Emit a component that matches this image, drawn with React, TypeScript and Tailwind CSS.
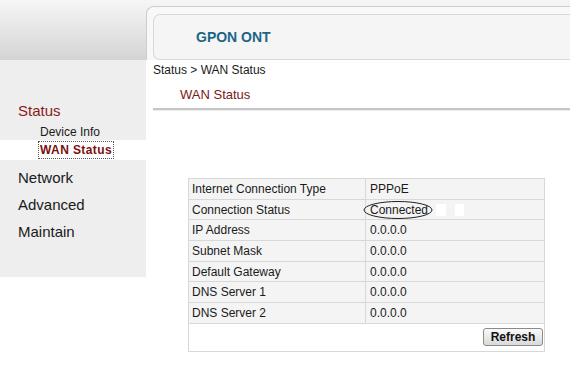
import React from 'react';

const rows: [string, string][] = [
  ['Internet Connection Type', 'PPPoE'],
  ['Connection Status', 'Connected'],
  ['IP Address', '0.0.0.0'],
  ['Subnet Mask', '0.0.0.0'],
  ['Default Gateway', '0.0.0.0'],
  ['DNS Server 1', '0.0.0.0'],
  ['DNS Server 2', '0.0.0.0'],
];

export default function App() {
  return (
    <div className="w-[570px] h-[369px] bg-white overflow-hidden font-['Liberation_Sans',Arial,sans-serif] text-[#1a1a1a]">
      {/* header */}
      <div className="flex h-[60px] bg-gradient-to-b from-[#f6f6f6] to-[#d4d4d4]">
        <div className="w-[146px]" />
        <div className="flex-1 mt-[6px] pl-[6px] pt-[7px] rounded-tl-[8px] border-t border-l border-[#cdcdcd] bg-[#f8f8f8]">
          <div className="h-[46px] flex items-center pl-[42px] rounded-l-[7px] border border-r-0 border-[#d8d8d8] bg-[#f5f5f5]">
            <span className="text-[14px] font-bold text-[#1d6587]">GPON ONT</span>
          </div>
        </div>
      </div>

      <div className="flex">
        {/* sidebar */}
        <div className="w-[146px] h-[217px] bg-[#eeeeee] pt-[42px]">
          <div className="pl-[18px] text-[15px] leading-[18px] text-[#8b1a1a]">Status</div>
          <div className="pl-[40px] mt-[4px] text-[12px] leading-[16px]">Device Info</div>
          <div className="bg-white h-[20px] flex items-center pl-[39px]">
            <span className="text-[12px] leading-[16px] font-bold tracking-[0.4px] text-[#7a1010] outline outline-1 outline-dotted outline-[#555] px-[1px]">
              WAN Status
            </span>
          </div>
          <div className="pl-[18px] mt-[9px] text-[15px] leading-[18px]">Network</div>
          <div className="pl-[18px] mt-[9px] text-[15px] leading-[18px]">Advanced</div>
          <div className="pl-[18px] mt-[9px] text-[15px] leading-[18px]">Maintain</div>
        </div>

        {/* content */}
        <div className="flex-1">
          <div className="pl-[7px] pt-[3px] text-[12px] leading-[14px]">Status &gt; WAN Status</div>
          <div className="pl-[34px] mt-[10px] text-[13px] leading-[16px] text-[#7a1a1a]">WAN Status</div>
          <div className="ml-[7px] mt-[5px] h-[3px] border-t-2 border-[#c6c6c6] bg-[#ececec]" />

          <div className="ml-[42px] mt-[67px] w-[357px] border border-[#d8d8d8]">
            {rows.map(([label, value]) => (
              <div key={label} className="flex h-[20.7px] border-b border-[#d8d8d8] bg-[#f4f4f4] text-[12px] leading-[14px]">
                <div className="w-[177px] border-r border-[#d8d8d8] flex items-center pl-[3px]">{label}</div>
                <div className="flex-1 flex items-center pl-[4px]">
                  {label === 'Connection Status' ? (
                    <span className="relative flex items-center">
                      <span>{value}</span>
                      <svg className="absolute left-[-7px] top-[-3px]" width="72" height="20" viewBox="0 0 72 20">
                        <ellipse cx="35" cy="10" rx="34" ry="8.5" fill="none" stroke="#222" strokeWidth="1" />
                      </svg>
                      <span className="ml-[8px] w-[10px] h-[12px] bg-white" />
                      <span className="ml-[9px] w-[9px] h-[12px] bg-white" />
                    </span>
                  ) : (
                    value
                  )}
                </div>
              </div>
            ))}
            <div className="h-[27px] bg-white flex items-center justify-end pr-[1px]">
              <button className="w-[60px] h-[18px] rounded-[3px] border border-[#8a8a8a] bg-gradient-to-b from-[#fafafa] to-[#d9d9d9] text-[12px] leading-[14px] font-bold text-[#111]">
                Refresh
              </button>
            </div>
          </div>
        </div>
      </div>
    </div>
  );
}
